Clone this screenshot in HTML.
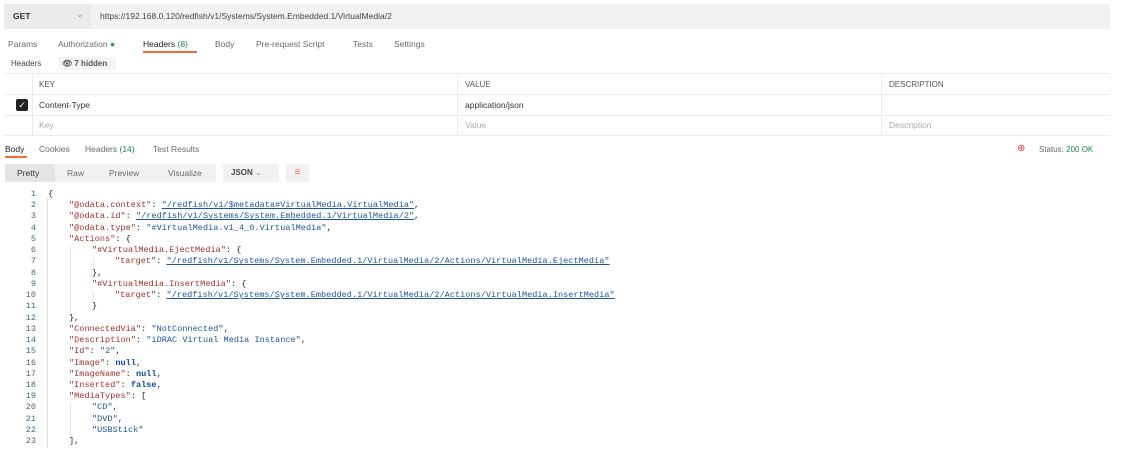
<!DOCTYPE html>
<html><head><meta charset="utf-8"><style>
*{margin:0;padding:0;box-sizing:border-box}
body{width:1143px;height:457px;background:#fff;font-family:"Liberation Sans",sans-serif;position:relative;overflow:hidden;color:#212121}
.a{position:absolute;white-space:nowrap}
.t{font-size:8.5px;color:#6b6b6b}
.code{position:absolute;left:0;top:189px;font-family:"Liberation Mono",monospace;font-size:8.5px;letter-spacing:0.05px;line-height:11.24px;height:256px;overflow:hidden;width:1100px}
.ln{display:inline-block;width:36px;text-align:right;color:#3a6a8a;margin-right:12px}
.k{color:#a0312a}.s{color:#1a55a0}.u{color:#1a55a0;text-decoration:underline}.n{color:#0b4aa8;font-weight:bold}.p{color:#333}
.row{white-space:pre}
.i1{display:inline-block;width:21px}.i2{display:inline-block;width:44px}.i3{display:inline-block;width:67px}
</style></head><body>
<div class="a" style="left:4px;top:4px;width:1106px;height:25px;background:#f2f2f2"></div>
<div class="a" style="left:4px;top:4px;width:87px;height:25px;background:#ebebeb"></div>
<div class="a" style="left:13px;top:11px;font-size:8.5px;font-weight:bold;color:#333">GET</div>
<div class="a" style="left:76px;top:9px;font-size:9px;color:#888">⌄</div>
<div class="a" style="left:100px;top:11px;font-size:8.5px;color:#444">https://192.168.0.120/redfish/v1/Systems/System.Embedded.1/VirtualMedia/2</div>
<div class="a t" style="left:8px;top:39px">Params</div>
<div class="a t" style="left:58px;top:39px">Authorization <span style="color:#1fa34a">●</span></div>
<div class="a" style="left:143px;top:39px;font-size:8.5px;color:#222">Headers <span style="color:#1e8a4a">(8)</span></div>
<div class="a" style="left:143px;top:51px;width:54px;height:2px;background:#f26b3a"></div>
<div class="a t" style="left:215px;top:39px">Body</div>
<div class="a t" style="left:256px;top:39px">Pre-request Script</div>
<div class="a t" style="left:353px;top:39px">Tests</div>
<div class="a t" style="left:394px;top:39px">Settings</div>
<div class="a" style="left:11px;top:59px;font-size:8px;color:#444">Headers</div>
<div class="a" style="left:58px;top:57px;width:58px;height:13px;background:#f4f4f4"></div>
<div class="a" style="left:62px;top:59px;font-size:8px;color:#555;font-weight:bold">👁 7 hidden</div>
<div class="a" style="left:4px;top:73px;width:1106px;height:63px;border-top:1px solid #ececec;border-bottom:1px solid #ececec"></div>
<div class="a" style="left:4px;top:94px;width:1106px;height:1px;background:#ececec"></div>
<div class="a" style="left:4px;top:115px;width:1106px;height:1px;background:#ececec"></div>
<div class="a" style="left:32px;top:73px;width:1px;height:63px;background:#ececec"></div>
<div class="a" style="left:457px;top:73px;width:1px;height:63px;background:#ececec"></div>
<div class="a" style="left:881px;top:73px;width:1px;height:63px;background:#ececec"></div>
<div class="a" style="left:39px;top:80px;font-size:8px;color:#555">KEY</div>
<div class="a" style="left:465px;top:80px;font-size:8px;color:#555">VALUE</div>
<div class="a" style="left:889px;top:80px;font-size:8px;color:#555">DESCRIPTION</div>
<div class="a" style="left:16px;top:99px;width:12px;height:12px;background:#222;border-radius:2px;color:#fff;font-size:9px;line-height:12px;text-align:center">✓</div>
<div class="a" style="left:39px;top:100px;font-size:8.5px;color:#333">Content-Type</div>
<div class="a" style="left:465px;top:100px;font-size:8.5px;color:#333">application/json</div>
<div class="a" style="left:39px;top:120px;font-size:8.5px;color:#aaa">Key</div>
<div class="a" style="left:465px;top:120px;font-size:8.5px;color:#aaa">Value</div>
<div class="a" style="left:889px;top:120px;font-size:8.5px;color:#aaa">Description</div>
<div class="a" style="left:5px;top:144px;font-size:8.5px;color:#222">Body</div>
<div class="a" style="left:5px;top:156px;width:22px;height:2px;background:#f26b3a"></div>
<div class="a t" style="left:39px;top:144px">Cookies</div>
<div class="a t" style="left:85px;top:144px">Headers <span style="color:#1e8a4a">(14)</span></div>
<div class="a t" style="left:153px;top:144px">Test Results</div>
<div class="a" style="left:1017px;top:143px;font-size:10px;color:#d33">⊕</div>
<div class="a" style="left:1039px;top:145px;font-size:8px;color:#666">Status: <span style="color:#1e8a4a">200 OK</span></div>
<div class="a" style="left:5px;top:164px;width:211px;height:18px;background:#f2f2f2"></div>
<div class="a" style="left:5px;top:164px;width:50px;height:18px;background:#e4e4e4"></div>
<div class="a" style="left:17px;top:168px;font-size:8.5px;color:#333">Pretty</div>
<div class="a t" style="left:67px;top:168px">Raw</div>
<div class="a t" style="left:109px;top:168px">Preview</div>
<div class="a t" style="left:168px;top:168px">Visualize</div>
<div class="a" style="left:223px;top:164px;width:56px;height:18px;background:#f2f2f2"></div>
<div class="a" style="left:231px;top:168px;font-size:8px;font-weight:bold;color:#444">JSON <span style="font-weight:normal;color:#888">⌄</span></div>
<div class="a" style="left:286px;top:164px;width:23px;height:18px;background:#f2f2f2;color:#f26b3a;font-size:10px;text-align:center;line-height:18px">≡</div>
<div class="a" style="left:47px;top:198px;width:1px;height:250px;background:#ddd"></div>
<div class="a" style="left:70px;top:246px;width:1px;height:67px;background:#e4e4e4"></div>
<div class="a" style="left:93px;top:258px;width:1px;height:10px;background:#e4e4e4"></div>
<div class="a" style="left:93px;top:292px;width:1px;height:10px;background:#e4e4e4"></div>
<div class="a" style="left:70px;top:403px;width:1px;height:34px;background:#e4e4e4"></div>
<div class="code">
<div class="row"><span class="ln">1</span><span class="p">{</span></div>
<div class="row"><span class="ln">2</span><span class="i1"></span><span class="k">"@odata.context"</span>: <span class="u">"/redfish/v1/$metadata#VirtualMedia.VirtualMedia"</span>,</div>
<div class="row"><span class="ln">3</span><span class="i1"></span><span class="k">"@odata.id"</span>: <span class="u">"/redfish/v1/Systems/System.Embedded.1/VirtualMedia/2"</span>,</div>
<div class="row"><span class="ln">4</span><span class="i1"></span><span class="k">"@odata.type"</span>: <span class="s">"#VirtualMedia.v1_4_0.VirtualMedia"</span>,</div>
<div class="row"><span class="ln">5</span><span class="i1"></span><span class="k">"Actions"</span>: {</div>
<div class="row"><span class="ln">6</span><span class="i2"></span><span class="k">"#VirtualMedia.EjectMedia"</span>: {</div>
<div class="row"><span class="ln">7</span><span class="i3"></span><span class="k">"target"</span>: <span class="u">"/redfish/v1/Systems/System.Embedded.1/VirtualMedia/2/Actions/VirtualMedia.EjectMedia"</span></div>
<div class="row"><span class="ln">8</span><span class="i2"></span>},</div>
<div class="row"><span class="ln">9</span><span class="i2"></span><span class="k">"#VirtualMedia.InsertMedia"</span>: {</div>
<div class="row"><span class="ln">10</span><span class="i3"></span><span class="k">"target"</span>: <span class="u">"/redfish/v1/Systems/System.Embedded.1/VirtualMedia/2/Actions/VirtualMedia.InsertMedia"</span></div>
<div class="row"><span class="ln">11</span><span class="i2"></span>}</div>
<div class="row"><span class="ln">12</span><span class="i1"></span>},</div>
<div class="row"><span class="ln">13</span><span class="i1"></span><span class="k">"ConnectedVia"</span>: <span class="s">"NotConnected"</span>,</div>
<div class="row"><span class="ln">14</span><span class="i1"></span><span class="k">"Description"</span>: <span class="s">"iDRAC Virtual Media Instance"</span>,</div>
<div class="row"><span class="ln">15</span><span class="i1"></span><span class="k">"Id"</span>: <span class="s">"2"</span>,</div>
<div class="row"><span class="ln">16</span><span class="i1"></span><span class="k">"Image"</span>: <span class="n">null</span>,</div>
<div class="row"><span class="ln">17</span><span class="i1"></span><span class="k">"ImageName"</span>: <span class="n">null</span>,</div>
<div class="row"><span class="ln">18</span><span class="i1"></span><span class="k">"Inserted"</span>: <span class="n">false</span>,</div>
<div class="row"><span class="ln">19</span><span class="i1"></span><span class="k">"MediaTypes"</span>: [</div>
<div class="row"><span class="ln">20</span><span class="i2"></span><span class="s">"CD"</span>,</div>
<div class="row"><span class="ln">21</span><span class="i2"></span><span class="s">"DVD"</span>,</div>
<div class="row"><span class="ln">22</span><span class="i2"></span><span class="s">"USBStick"</span></div>
<div class="row"><span class="ln">23</span><span class="i1"></span>],</div>
</div>
</body></html>
